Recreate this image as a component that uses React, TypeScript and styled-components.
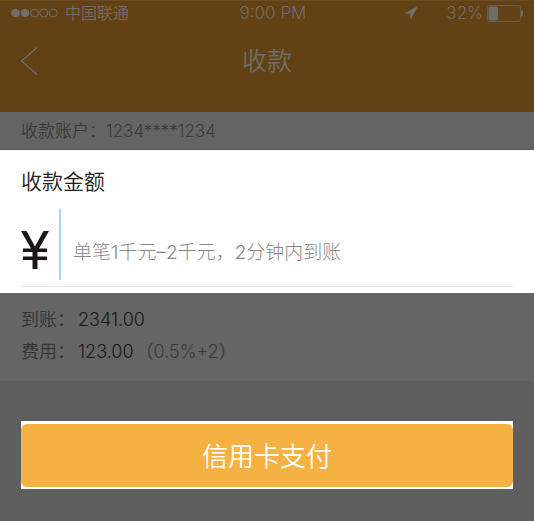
import React from "react";
import styled, { createGlobalStyle } from "styled-components";

const latin = 'Inter, "Noto Sans CJK SC", sans-serif';

const GlobalStyle = createGlobalStyle`
  * { box-sizing: border-box; }
  body {
    margin: 0;
    background: #5f5f5f;
    font-family: ${latin};
    font-weight: 350;
  }
`;

const Screen = styled.div`
  display: flex;
  flex-direction: column;
  min-height: 100vh;
`;

const Header = styled.header`
  padding-bottom: 32px;
  border-top: 1px solid #6b4c22;
  background: #624114;
  color: #6f6d6b;
`;

const StatusBar = styled.div`
  display: grid;
  grid-template-columns: 1fr auto 1fr;
  align-items: center;
  height: 24px;
  padding: 0 11px 0 23px;
  font-size: 17px;
  line-height: 24px;
`;

const StatusGroup = styled.div<{ $end?: boolean }>`
  display: flex;
  align-items: center;
  justify-content: ${(p) => (p.$end ? "flex-end" : "flex-start")};
  gap: ${(p) => (p.$end ? "4px" : "7px")};
  margin-left: ${(p) => (p.$end ? "0" : "-12px")};
`;

const Carrier = styled.span`
  font-size: 16px;
`;

const LocationIcon = styled.svg`
  margin-right: 24px;
`;

const NavBar = styled.nav`
  display: grid;
  grid-template-columns: 1fr auto 1fr;
  align-items: center;
  height: 55px;
  padding: 16px 20px 0;
`;

const BackButton = styled.button`
  display: flex;
  justify-self: start;
  padding: 0;
  border: 0;
  background: none;
  color: inherit;
`;

const Title = styled.h1`
  margin: 0;
  font-size: 25px;
  font-weight: 350;
  line-height: 36px;
`;

const AccountRow = styled.div`
  height: 38px;
  padding: 0 21px;
  border-bottom: 1px solid #585858;
  background: #646464;
  color: #3a3a3a;
  font-size: 17px;
  line-height: 39px;
`;

const AmountPanel = styled.section`
  padding: 15px 21px 6px;
  background: #fff;
  color: #222;
`;

const AmountLabel = styled.label`
  display: block;
  font-size: 21px;
  line-height: 34px;
`;

const AmountField = styled.div`
  display: flex;
  height: 88px;
  padding-top: 10px;
  border-bottom: 1px solid #e4e4e4;
`;

const YenIcon = styled.svg`
  flex: none;
  margin-top: 22px;
`;

const Caret = styled.span`
  flex: none;
  width: 2px;
  height: 71px;
  margin: 0 12px 0 10px;
  background: #a9d5f8;
`;

const AmountInput = styled.input`
  flex: 1;
  min-width: 0;
  height: 71px;
  padding: 16px 0 0;
  border: 0;
  outline: 0;
  background: none;
  color: #222;
  font: 300 19px ${latin};

  &::placeholder {
    color: #888;
    opacity: 1;
  }
`;

const Details = styled.dl`
  display: grid;
  grid-template-columns: 57px 1fr;
  row-gap: 3px;
  margin: 0;
  padding: 12px 21px 15px;
  background: #656565;
  color: #343434;
  font-size: 18px;
  line-height: 29px;
`;

const Term = styled.dt`
  margin: 0;
`;

const Value = styled.dd`
  margin: 0;
  color: #1b1718;
`;

const Formula = styled.span`
  margin-left: 2px;
  color: #3a3a3a;
`;

const Actions = styled.footer`
  flex: 1;
  padding: 39px 21px 33px;
  border-top: 1px solid #5b5b5b;
  background: #5f5f5f;
`;

const PayFrame = styled.div`
  padding: 3px 0 2px;
  background: #fff;
`;

const PayButton = styled.button`
  display: block;
  width: 100%;
  height: 63px;
  padding: 0 0 2px;
  border: 0;
  border-radius: 6px;
  background: #f6b143;
  color: #fff;
  font: 350 26px ${latin};
`;

export default function App() {
  return (
    <Screen>
      <GlobalStyle />
      <Header>
        <StatusBar>
          <StatusGroup>
            <svg width="47" height="10" viewBox="0 0 47 10" aria-hidden="true">
              <g fill="currentColor">
                <circle cx="4.5" cy="5" r="4.3" />
                <circle cx="14" cy="5" r="4.3" />
              </g>
              <g fill="none" stroke="currentColor">
                <circle cx="23.5" cy="5" r="4" />
                <circle cx="32.8" cy="5" r="4" />
                <circle cx="42.2" cy="5" r="4" />
              </g>
            </svg>
            <Carrier>中国联通</Carrier>
          </StatusGroup>
          <span>9:00 PM</span>
          <StatusGroup $end>
            <LocationIcon width="14" height="14" viewBox="0 0 14 14" aria-hidden="true">
              <path d="M14 0 6.5 14 6 8 0 7.5Z" fill="currentColor" />
            </LocationIcon>
            <span>32%</span>
            <svg width="36" height="17" viewBox="0 0 36 17" aria-hidden="true">
              <rect x="0.5" y="0.5" width="33" height="16" rx="2.5" fill="none" stroke="currentColor" strokeOpacity="0.6" />
              <rect x="1.5" y="1.5" width="9.5" height="14" rx="2" fill="currentColor" />
              <path d="M34 5.5h1q1 0 1 1v4q0 1-1 1h-1z" fill="currentColor" />
            </svg>
          </StatusGroup>
        </StatusBar>
        <NavBar>
          <BackButton type="button" aria-label="返回">
            <svg width="18" height="28" viewBox="0 0 18 28" aria-hidden="true">
              <path d="M17 0.5 1.5 14 17 27.5" fill="none" stroke="currentColor" strokeWidth="1.3" />
            </svg>
          </BackButton>
          <Title>收款</Title>
        </NavBar>
      </Header>
      <AccountRow>收款账户：1234****1234</AccountRow>
      <AmountPanel>
        <AmountLabel htmlFor="amount">收款金额</AmountLabel>
        <AmountField>
          <YenIcon width="28" height="38" viewBox="0 0 28 38" role="img" aria-label="¥">
            <path
              d="M0 0H5.5L14 15.5 22.5 0H28L18 17.5H26V21H16.5V25.5H26V29H16.5V38H11.5V29H2V25.5H11.5V21H2V17.5H10Z"
              fill="#1b1718"
            />
          </YenIcon>
          <Caret />
          <AmountInput id="amount" inputMode="decimal" placeholder="单笔1千元–2千元，2分钟内到账" />
        </AmountField>
      </AmountPanel>
      <Details>
        <Term>到账：</Term>
        <Value>2341.00</Value>
        <Term>费用：</Term>
        <Value>
          123.00<Formula>（0.5%+2）</Formula>
        </Value>
      </Details>
      <Actions>
        <PayFrame>
          <PayButton type="button">信用卡支付</PayButton>
        </PayFrame>
      </Actions>
    </Screen>
  );
}
